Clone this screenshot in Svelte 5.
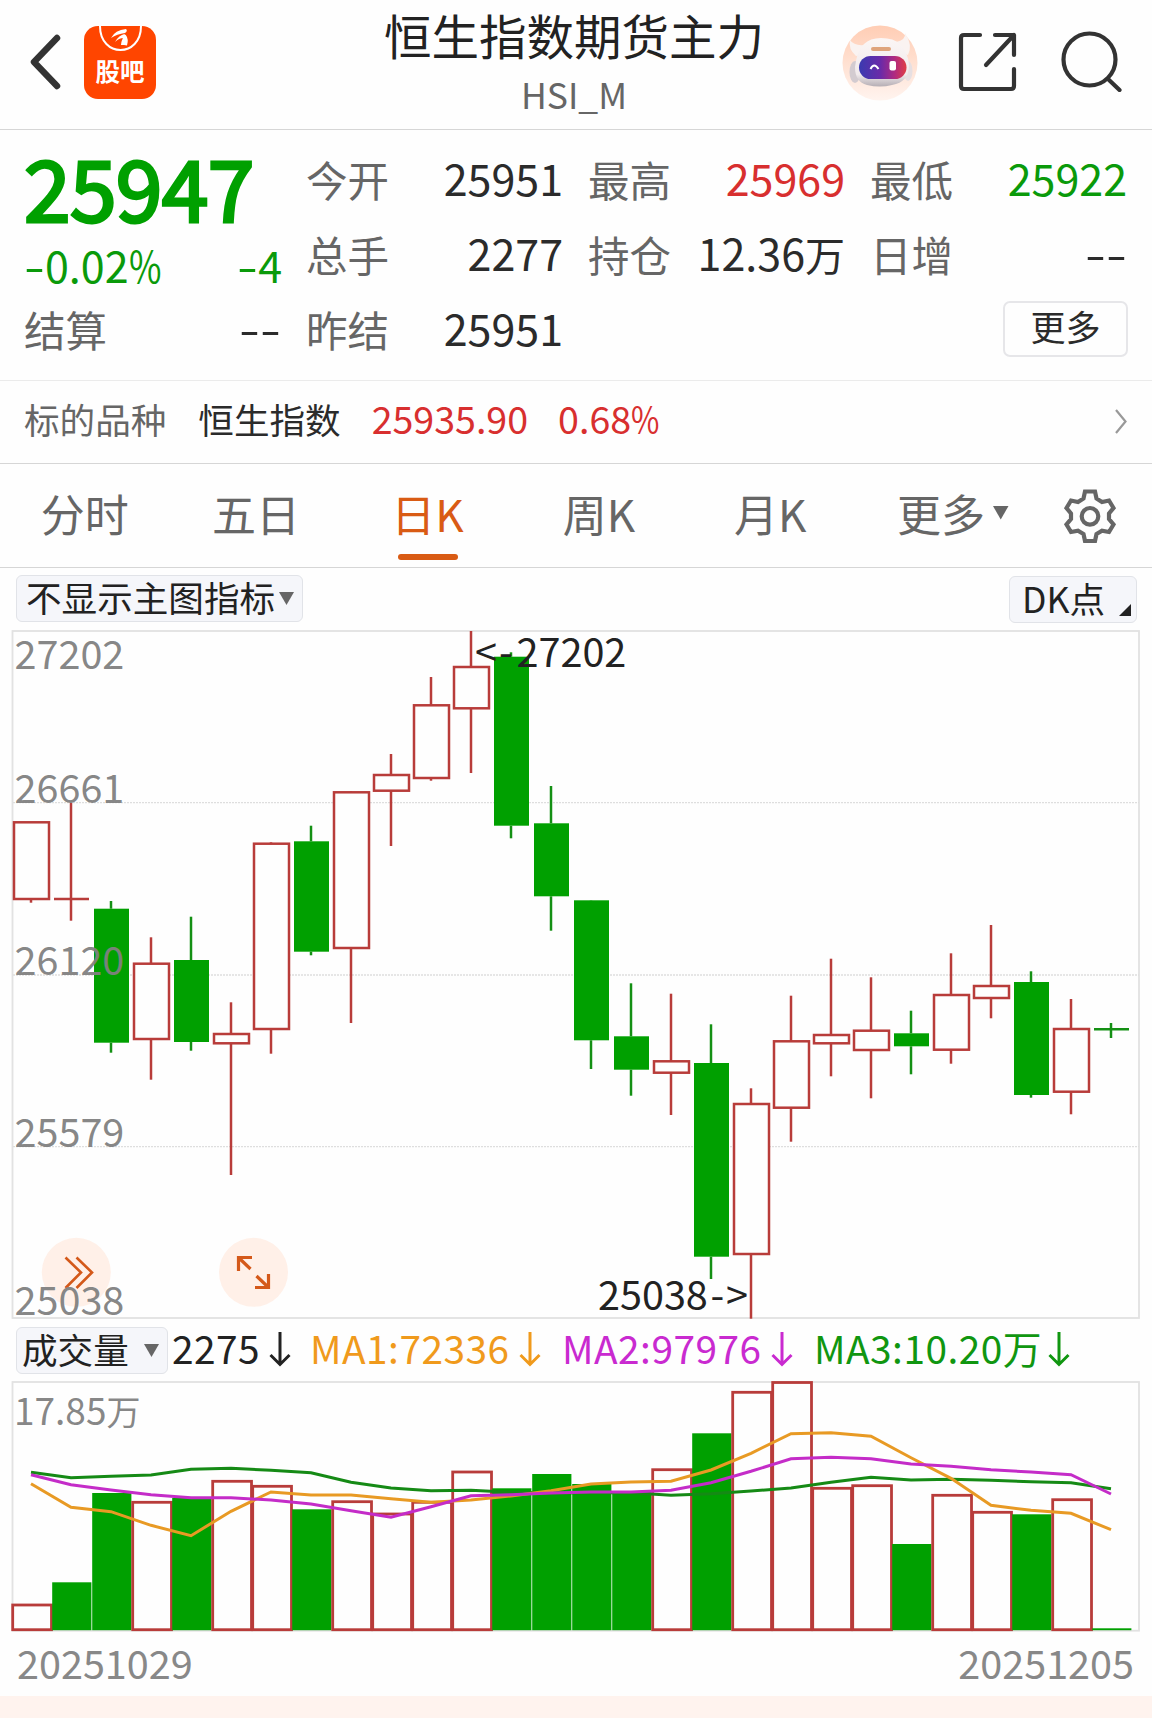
<script>
  const tabs = ['分时', '五日', '日K', '周K', '月K'];
  let activeTab = '日K';

  const STEP = 40;
  const FIRST_X = 31;

  // direction, high, body top, body bottom, low (chart space)
  const candles = [
    ['up', 822, 822.3, 899, 902.7],
    ['up', 802.7, 899, 899, 920.7],
    ['down', 901, 908.7, 1042.7, 1052.7],
    ['up', 937.3, 963.7, 1039, 1079.7],
    ['down', 916.7, 960, 1042, 1050.7],
    ['up', 1002.3, 1034, 1043.3, 1175],
    ['up', 842.3, 843.7, 1029, 1053.7],
    ['down', 825.7, 841.3, 951.7, 955.3],
    ['up', 791.3, 792.3, 948, 1023],
    ['up', 754, 775, 790.7, 846],
    ['up', 677, 705.3, 778, 780.7],
    ['up', 631, 667, 708.3, 773],
    ['down', 652.3, 656.7, 825.7, 838.3],
    ['down', 786, 823.3, 896.3, 930.7],
    ['down', 900, 900.3, 1040.3, 1069],
    ['down', 983.3, 1036.3, 1069.7, 1095.7],
    ['up', 993.7, 1061.3, 1072.7, 1115],
    ['down', 1024.3, 1063, 1256.7, 1279],
    ['up', 1088.3, 1104, 1254, 1318.7],
    ['up', 995.7, 1041.3, 1107.7, 1141.7],
    ['up', 958.7, 1035, 1043.3, 1076.3],
    ['up', 977.3, 1030.7, 1050, 1098.3],
    ['down', 1010.7, 1033.3, 1046.3, 1074.3],
    ['up', 953.3, 995, 1049.7, 1063.7],
    ['up', 925, 986, 998, 1018.3],
    ['down', 971.3, 982, 1095, 1097.7],
    ['up', 999, 1029, 1091.7, 1114.3],
    ['down', 1023, 1029.3, 1029.3, 1038],
  ].map(([dir, high, top, bottom, low], i) => ({ dir, high, top, bottom, low, x: FIRST_X + i * STEP }));

  const volumeTops = [
    1605, 1582.3, 1493, 1502.3, 1498, 1481.3, 1486.3, 1509.3, 1501.7, 1514, 1502.3, 1472, 1488.3, 1474,
    1484, 1491.5, 1469.7, 1433.3, 1392.3, 1382.5, 1488.3, 1485.7, 1544, 1495.3, 1512.3, 1514.3, 1499.7, 1628.3,
  ];
  const VOLUME_BASE = 1629.7;
  // the second day is a doji that still counts as a falling volume bar
  const volumes = volumeTops.map((top, i) => ({ top, dir: i === 1 ? 'down' : candles[i].dir, x: 12 + i * STEP }));

  // moving averages, in thirds of a pixel below y = 1310
  const ma1 = [521, 592, 605, 646, 677, 604, 546, 555, 555, 566, 577, 570, 558, 542, 522, 516, 514, 480, 430, 371, 368, 379, 443, 505, 586, 601, 610, 659];
  const ma2 = [494, 524, 540, 554, 563, 563, 570, 582, 602, 622, 590, 557, 554, 549, 546, 546, 541, 518, 484, 446, 442, 446, 462, 469, 479, 486, 494, 552];
  const ma3 = [487, 503, 499, 495, 478, 475, 481, 488, 517, 534, 542, 541, 547, 549, 548, 548, 556, 551, 543, 534, 517, 502, 510, 508, 511, 515, 518, 536];

  function toPoints(values) {
    return values.map((v, i) => `${FIRST_X + i * STEP},${(1310 + v / 3).toFixed(1)}`).join(' ');
  }

  const gridLines = [802.7, 975, 1146.7];
  const axisLabels = [
    [27202, 669],
    [26661, 803],
    [26120, 975],
    [25579, 1147],
    [25038, 1315],
  ];

  const averages = [
    { name: 'current', text: '2275' },
    { name: 'ma1', text: 'MA1:72336' },
    { name: 'ma2', text: 'MA2:97976' },
    { name: 'ma3', text: 'MA3:10.20万' },
  ];
</script>

<div class="page">
  <header>
    <div class="side">
      <svg class="back" width="40" height="60" viewBox="0 0 40 60">
        <path d="M32 6 L9 30 L32 54" fill="none" stroke="#333" stroke-width="6.500" stroke-linecap="round" stroke-linejoin="round" />
      </svg>
      <div class="guba">
        <svg width="72" height="30" viewBox="0 0 72 30">
          <path d="M16 0 C16 32 57 32 57 0" fill="none" stroke="#fff" stroke-width="2" />
          <path d="M27 12 Q31 4 42 3 Q44 5 41 7 Q33 8 27 12Z M31 16 Q35 9 40.500 8 Q42 10 39.500 12 Q35 12 31 16Z M37 19 Q37 14 41.500 8.500 Q45 13 43 19.500 L40 19Z" fill="#fff" />
        </svg>
        <span>股吧</span>
      </div>
    </div>
    <div class="title">
      <h1>恒生指数期货主力</h1>
      <p>HSI_M</p>
    </div>
    <div class="side right">
      <svg class="robot" width="76" height="76" viewBox="0 0 76 76">
        <defs>
          <linearGradient id="halo" x1="0" y1="0" x2="0" y2="1">
            <stop offset="0" stop-color="#ffcdb4" />
            <stop offset="1" stop-color="#fff4ef" />
          </linearGradient>
          <linearGradient id="visor" x1="0" y1="0" x2="1" y2="0">
            <stop offset="0" stop-color="#3a3ab0" />
            <stop offset="0.45" stop-color="#6a2aa8" />
            <stop offset="0.75" stop-color="#b02a80" />
            <stop offset="1" stop-color="#e03d45" />
          </linearGradient>
          <linearGradient id="shell" x1="0" y1="0" x2="0" y2="1">
            <stop offset="0" stop-color="#fbf6f5" />
            <stop offset="0.75" stop-color="#f1eaec" />
            <stop offset="1" stop-color="#b5aeb4" />
          </linearGradient>
        </defs>
        <circle cx="38" cy="38" r="37.500" fill="url(#halo)" />
        <ellipse cx="13" cy="47" rx="5.500" ry="11" fill="#d3cbd0" />
        <ellipse cx="66" cy="46" rx="4.500" ry="10" fill="#e6dfe2" />
        <path d="M14 31 Q6 24 8 15 Q12 21 22 20 L20 30Z M54 17 Q64 15 63 8 Q71 20 66 30 L58 27Z" fill="#faf3f1" />
        <path d="M13 42 Q15 25 22 19 Q28 13 39 13 Q52 13 58 19 Q66 27 67 40 Q67 57 50 60 Q38 63 25 60 Q13 57 13 42Z" fill="url(#shell)" />
        <rect x="29" y="22" width="20" height="4" rx="2" fill="#dfa47c" />
        <rect x="17" y="31" width="47.500" height="23" rx="11.500" fill="url(#visor)" />
        <path d="M28.500 44 Q32 37 36.500 44" fill="none" stroke="#fff" stroke-width="2" />
        <rect x="47.500" y="36" width="6.500" height="9.500" rx="2" fill="#fff" />
      </svg>
      <svg class="share" width="60" height="60" viewBox="0 0 60 60" fill="none" stroke="#333" stroke-width="4.200" stroke-linecap="round" stroke-linejoin="round">
        <path d="M22 3 H6 Q3 3 3 6 V54 Q3 57 6 57 H53 Q56 57 56 54 V37" />
        <path d="M37 3 H56 V23 M56 3 L28 33" />
      </svg>
      <svg class="search" width="62" height="62" viewBox="0 0 62 62" fill="none" stroke="#333" stroke-width="4.200" stroke-linecap="round">
        <circle cx="28.500" cy="29.500" r="26" />
        <path d="M47 49 L58.500 60" />
      </svg>
    </div>
  </header>

  <section class="quote">
    <div class="last down">
      <div class="price">25947</div>
      <div class="change">
        <span><i class="dash">-</i>0.02<i class="percent">%</i></span>
        <span><i class="dash">-</i>4</span>
      </div>
    </div>
    <div class="cell"><span>今开</span><b>25951</b></div>
    <div class="cell"><span>最高</span><b class="up">25969</b></div>
    <div class="cell"><span>最低</span><b class="down">25922</b></div>
    <div class="cell"><span>总手</span><b>2277</b></div>
    <div class="cell"><span>持仓</span><b>12.36<i class="unit">万</i></b></div>
    <div class="cell"><span>日增</span><b><i class="dash">-</i><i class="dash">-</i></b></div>
    <div class="cell"><span>结算</span><b><i class="dash">-</i><i class="dash">-</i></b></div>
    <div class="cell"><span>昨结</span><b>25951</b></div>
    <button class="more">更多</button>
  </section>

  <section class="underlying">
    <span class="name">标的品种</span>
    <span class="index">恒生指数</span>
    <span class="up value">25935.90</span>
    <span class="up value">0.68<i class="percent">%</i></span>
    <svg width="14" height="28" viewBox="0 0 14 28">
      <path d="M2 3 L11.500 14.500 L2 26" fill="none" stroke="#999" stroke-width="2.200" />
    </svg>
  </section>

  <nav>
    {#each tabs as tab}
      <button class:active={tab === activeTab} on:click={() => (activeTab = tab)}>{tab}</button>
    {/each}
    <button class="other">
      更多
      <svg width="16" height="14" viewBox="0 0 16 14"><path d="M0 0 H15.500 L7.750 13.500Z" fill="#666" /></svg>
    </button>
    <svg class="gear" width="54" height="54" viewBox="0 0 54 54" fill="none" stroke="#666" stroke-width="4.200">
      <path d="M22 2.500 H32 L33.500 9.500 L39 13 L46 11.500 L50.500 19 L46 24.500 V30 L50.500 35.500 L46 43 L39 41.600 L33.500 45 L32 52 H22 L20.500 45 L15 41.600 L8 43 L3.500 35.500 L8 30 V24.500 L3.500 19 L8 11.500 L15 13 L20.500 9.500Z" />
      <circle cx="27" cy="27.300" r="8.300" />
    </svg>
  </nav>

  <div class="toolbar">
    <button class="chip">
      不显示主图指标
      <svg width="15" height="13" viewBox="0 0 15 13"><path d="M0 0 H15 L7.500 13Z" fill="#666" /></svg>
    </button>
    <button class="chip dk">
      DK点
      <svg width="12" height="12" viewBox="0 0 12 12"><path d="M12 0 V12 H0Z" fill="#222" /></svg>
    </button>
  </div>

  <svg class="chart" width="1152" height="692" viewBox="0 629 1152 692">
    <rect x="12.500" y="631" width="1126.500" height="687" fill="none" stroke="#e2e2e2" stroke-width="1.800" />
    {#each gridLines as y}
      <line x1="13" x2="1139" y1={y} y2={y} stroke="#dedede" stroke-width="1.300" stroke-dasharray="2 1" />
    {/each}
    {#each candles as c}
      <g class={c.dir}>
        {#if c.top === c.bottom}
          <line x1={c.x - 17} x2={c.x + 18} y1={c.top} y2={c.top} />
          <line x1={c.x} x2={c.x} y1={c.high} y2={c.low} />
        {:else}
          <line x1={c.x} x2={c.x} y1={c.high} y2={c.top} />
          <line x1={c.x} x2={c.x} y1={c.bottom} y2={c.low} />
          <rect x={c.x - 17} y={c.top} width="35" height={c.bottom - c.top} />
        {/if}
      </g>
    {/each}
    <circle cx="76.300" cy="1272.300" r="34.500" fill="#fff0e8" />
    <path d="M65.500 1257.500 L81 1272.500 L65.500 1288 M76.500 1257.500 L92 1272.500 L76.500 1288" fill="none" stroke="#d4591a" stroke-width="2.600" />
    <circle cx="253.500" cy="1272.300" r="34.500" fill="#fff0e8" />
    <path d="M252 1257.500 H238.500 V1271 M238.500 1257.500 L250.500 1269 M255 1287.500 H268.500 V1274 M268.500 1287.500 L256.500 1276" fill="none" stroke="#d4591a" stroke-width="3.200" />
    {#each axisLabels as [label, y]}
      <text class="axis" x="14.500" {y}>{label}</text>
    {/each}
    <text class="mark" y="667"><tspan x="475">&lt;</tspan><tspan x="499">-</tspan><tspan x="516.500">27202</tspan></text>
    <text class="mark" y="1310"><tspan x="598">25038</tspan><tspan x="710.500">-</tspan><tspan x="726">&gt;</tspan></text>
  </svg>

  <div class="legend">
    <button class="chip">
      成交量
      <svg width="15" height="13" viewBox="0 0 15 13"><path d="M0 0 H15 L7.500 13Z" fill="#666" /></svg>
    </button>
    {#each averages as a}
      <span class={a.name}>
        {a.text}
        <svg width="22" height="35" viewBox="0 0 22 35" fill="none" stroke="currentColor" stroke-width="3">
          <path d="M11 0 V32 M1.500 23 L11 32.500 L20.500 23" />
        </svg>
      </span>
    {/each}
  </div>

  <svg class="chart" width="1152" height="254" viewBox="0 1379 1152 254">
    <rect x="12.500" y="1382" width="1126.500" height="248.700" fill="none" stroke="#e2e2e2" stroke-width="1.800" />
    {#each volumes as v}
      {#if v.dir === 'up'}
        <rect class="vol-up" x={v.x + 0.7} y={v.top} width="38.800" height={VOLUME_BASE - v.top} />
      {:else}
        <rect class="vol-down" x={v.x + 0.2} y={v.top} width="39.200" height={VOLUME_BASE - v.top + 0.5} />
      {/if}
    {/each}
    <polyline points={toPoints(ma3)} stroke="#158a15" />
    <polyline points={toPoints(ma1)} stroke="#e89a24" />
    <polyline points={toPoints(ma2)} stroke="#c42cc8" />
    <text class="axis small" x="14" y="1425">17.85<tspan class="wan">万</tspan></text>
  </svg>

  <div class="dates">
    <span>20251029</span>
    <span>20251205</span>
  </div>

  <div class="strip"></div>
</div>

<style>
  :global(body) {
    background: #fefefe;
  }

  .page {
    width: 1152px;
    height: 1718px;
    display: flex;
    flex-direction: column;
    overflow: hidden;
    background: #fefefe;
    color: #2b2b2b;
    font-family: 'Noto Sans CJK SC', 'Noto Sans', sans-serif;
  }

  svg {
    display: block;
    flex: none;
  }

  button {
    padding: 0;
    border: none;
    background: none;
    color: inherit;
    font: inherit;
  }

  .up {
    color: #d82f2f;
  }

  .down {
    color: #0a9a0a;
  }

  header {
    flex: none;
    box-sizing: border-box;
    height: 130px;
    display: grid;
    grid-template-columns: 320px 1fr 320px;
    border-bottom: 1px solid #d6d6d6;
  }

  .side {
    display: flex;
    align-items: flex-start;
    padding: 26px 0 0 25px;
  }

  .back {
    margin-top: 6px;
  }

  .guba {
    width: 72px;
    height: 73px;
    margin-left: 19px;
    border-radius: 14px;
    background: #ff4500;
    color: #fff;
    text-align: center;
  }

  .guba span {
    display: block;
    margin-top: -1px;
    font-size: 24.5px;
    font-weight: 700;
    line-height: 32px;
  }

  .side.right {
    padding: 25px 29px 0 0;
    justify-content: flex-end;
  }

  .robot {
    margin-right: 40px;
  }

  .share {
    margin: 7px 43px 0 0;
  }

  .search {
    margin-top: 5px;
  }

  .title {
    text-align: center;
    margin-left: -4px;
  }

  h1 {
    margin: 0;
    padding-top: 5px;
    font-size: 47.5px;
    font-weight: 400;
    line-height: 60px;
    color: #222;
  }

  .title p {
    margin: 7px 0 0;
    font-size: 35.5px;
    line-height: 44px;
    color: #666;
  }

  .quote {
    flex: none;
    box-sizing: border-box;
    height: 251px;
    padding: 10px 24px 0;
    display: grid;
    grid-template-columns: repeat(4, 258px);
    grid-template-rows: repeat(3, 75px);
    column-gap: 24px;
    border-bottom: 1px solid #ebebeb;
  }

  .last {
    grid-row: span 2;
    height: 150px;
  }

  .price {
    font-size: 84px;
    line-height: 92px;
    letter-spacing: -0.7px;
    color: #00a000;
    -webkit-text-stroke: 3px #00a000;
  }

  .change {
    display: flex;
    justify-content: space-between;
    font-size: 43px;
    line-height: 65px;
  }

  i {
    font-style: normal;
  }

  .dash {
    display: inline-block;
    width: 21px;
    text-align: center;
    transform: scaleX(1.4);
  }

  .percent {
    display: inline-block;
    width: 0.74em;
    transform: scaleX(0.82);
    transform-origin: left;
  }

  .unit {
    font-size: 40px;
  }

  .cell {
    display: flex;
    justify-content: space-between;
    line-height: 75px;
  }

  .cell span {
    position: relative;
    top: 1.5px;
    font-size: 41.5px;
    color: #666;
  }

  .cell b {
    position: relative;
    left: -1px;
    font-size: 43px;
    font-weight: 400;
  }

  .more {
    grid-column: 4;
    justify-self: end;
    box-sizing: border-box;
    width: 125px;
    height: 56px;
    margin-top: 11px;
    padding-bottom: 7px;
    border: 2px solid #e6e6e9;
    border-radius: 7px;
    font-size: 35px;
    line-height: 45px;
  }

  .underlying {
    flex: none;
    box-sizing: border-box;
    height: 83px;
    padding: 0 24px 7px 24px;
    display: flex;
    align-items: center;
    border-bottom: 1px solid #d6d6d6;
    font-size: 35.6px;
  }

  .underlying .name {
    color: #666;
    margin-right: 32px;
  }

  .underlying .index {
    margin-right: 31px;
  }

  .underlying .value {
    margin: -2px 30px 0 0;
    font-size: 37.6px;
  }

  .underlying svg {
    margin: 5px 0 0 auto;
  }

  nav {
    flex: none;
    box-sizing: border-box;
    height: 104px;
    display: flex;
    border-bottom: 1px solid #d6d6d6;
    font-size: 44px;
    line-height: 98px;
    color: #666;
  }

  nav button {
    position: relative;
    left: -1px;
    width: 171.4px;
    height: 98px;
  }

  nav button.active {
    color: #d95b14;
  }

  nav button.active::after {
    content: '';
    position: absolute;
    left: 56px;
    bottom: 2px;
    width: 60px;
    height: 6px;
    border-radius: 3px;
    background: #d95b14;
  }

  nav .other {
    display: flex;
    align-items: center;
    gap: 8px;
    width: 165px;
    padding-left: 41px;
    box-sizing: border-box;
  }

  .gear {
    margin: 25px 0 0 41px;
  }

  .toolbar {
    flex: none;
    height: 61px;
    padding: 0 15px 0 16px;
    display: flex;
    justify-content: space-between;
    align-items: flex-start;
  }

  .chip {
    box-sizing: border-box;
    height: 47px;
    margin-top: 7px;
    padding: 0 8px 4px 9px;
    display: flex;
    align-items: center;
    gap: 4px;
    border: 1.5px solid #e1e3e8;
    border-radius: 6px;
    background: #f5f6fa;
    color: #222;
    font-size: 35.6px;
    line-height: 40px;
    white-space: nowrap;
  }

  .chip svg {
    margin-top: 4px;
  }

  .chip.dk {
    width: 128px;
    margin-top: 8px;
    padding: 0 5px 4px 12px;
    justify-content: space-between;
  }

  .chip.dk svg {
    margin-top: 25px;
  }

  .chart .up {
    stroke: #b83c3a;
    stroke-width: 2.5;
    fill: #fefefe;
  }

  .chart .down line {
    stroke: #149014;
    stroke-width: 2.5;
  }

  .chart .down {
    fill: #00a000;
  }

  .chart text {
    font-size: 39.6px;
  }

  .axis {
    fill: #808080;
    fill-opacity: 0.94;
  }

  .chart text.small {
    font-size: 37px;
  }

  .wan {
    font-size: 34px;
  }

  .mark {
    fill: #222;
  }

  .vol-up {
    fill: #fefefe;
    stroke: #b83c3a;
    stroke-width: 2.8;
  }

  .vol-down {
    fill: #00a000;
  }

  polyline {
    fill: none;
    stroke-width: 3;
  }

  .legend {
    flex: none;
    height: 58px;
    padding-left: 16px;
    display: flex;
    align-items: flex-start;
    font-size: 38.8px;
    line-height: 52px;
  }

  .legend .chip {
    width: 152px;
    margin-top: 6px;
    padding-left: 5px;
    justify-content: space-between;
  }

  .legend span {
    display: flex;
    gap: 9px;
    letter-spacing: 0.5px;
  }

  .legend span svg {
    margin-top: 11px;
  }

  .legend .current {
    width: 138px;
    margin-left: 4px;
    color: #222;
  }

  .legend .ma1 {
    width: 252px;
    color: #f09a1c;
  }

  .legend .ma2 {
    width: 252px;
    color: #c92ad0;
  }

  .legend .ma3 {
    gap: 6px;
    color: #109610;
  }

  .dates {
    flex: none;
    height: 63px;
    padding: 0 18px 0 17px;
    display: flex;
    justify-content: space-between;
    font-size: 39.6px;
    line-height: 58px;
    color: #888;
  }

  .strip {
    flex: 1;
    background: #fff3ee;
  }
</style>
